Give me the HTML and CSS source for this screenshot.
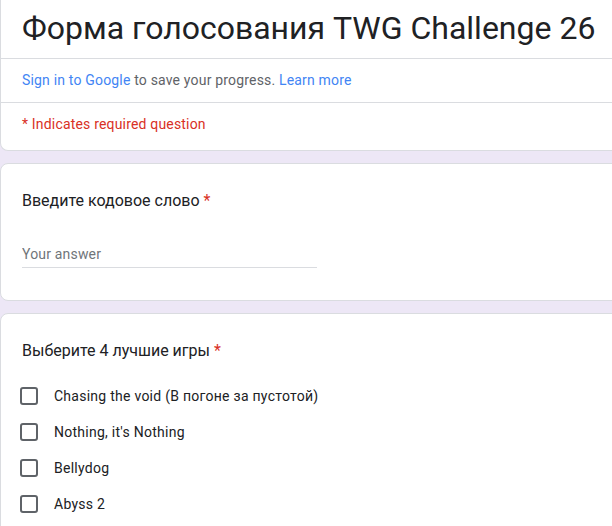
FILE: index.html
```html
<!DOCTYPE html>
<html lang="ru">
<head>
    <meta charset="UTF-8">
    <meta name="viewport" content="width=device-width, initial-scale=1.0">
    <title>Форма голосования TWG Challenge 26</title>
    <link rel="stylesheet" href="styles.css">
</head>
<body>
    <div class="form">
        <div class="card header">
            <h1 class="title">Форма голосования TWG Challenge 26</h1>
            <div class="signin">
                <a href="#">Sign in to Google</a> to save your progress. <a href="#">Learn more</a>
            </div>
            <div class="required-note">* Indicates required question</div>
        </div>

        <div class="card question">
            <div class="q-title">Введите кодовое слово <span class="star">*</span></div>
            <div class="answer">
                <input type="text" placeholder="Your answer">
            </div>
        </div>

        <div class="card question">
            <div class="q-title">Выберите 4 лучшие игры <span class="star">*</span></div>
            <ul class="options">
                <li><span class="box"></span>Chasing the void (В погоне за пустотой)</li>
                <li><span class="box"></span>Nothing, it's Nothing</li>
                <li><span class="box"></span>Bellydog</li>
                <li><span class="box"></span>Abyss 2</li>
            </ul>
        </div>
    </div>
</body>
</html>
```

FILE: styles.css
```css
html, body {
    margin: 0;
    padding: 0;
}
body {
    background-color: #ede7f6;
    font-family: Roboto, "Liberation Sans", sans-serif;
    overflow: hidden;
}
.form {
    width: 640px;
    display: flex;
    flex-direction: column;
    gap: 12px;
}
.card {
    background-color: white;
    border: 1px solid #dadce0;
    border-radius: 8px;
}
.header {
    border-top: none;
    border-radius: 0 0 8px 8px;
}
.title {
    margin: 0;
    padding: 8px 21px 0;
    height: 50px;
    font-size: 32px;
    font-weight: 400;
    line-height: 40px;
    color: #202124;
    border-bottom: 1px solid #dadce0;
}
.signin {
    padding: 0 21px;
    height: 43px;
    line-height: 43px;
    font-size: 14px;
    letter-spacing: 0.18px;
    color: #5f6368;
    border-bottom: 1px solid #dadce0;
}
.signin a {
    color: #4285f4;
    text-decoration: none;
}
.required-note {
    padding: 0 21px;
    height: 47px;
    line-height: 42px;
    font-size: 14px;
    letter-spacing: 0.18px;
    color: #d93025;
}
.question {
    padding: 25px 21px 32px;
}
.q-title {
    font-size: 16px;
    line-height: 24px;
    color: #202124;
}
.star {
    color: #d93025;
}
.answer {
    margin-top: 29px;
    width: 295px;
}
.answer input {
    width: 100%;
    box-sizing: border-box;
    border: none;
    border-bottom: 1px solid #dadce0;
    padding: 4px 0 5px;
    font-family: inherit;
    font-size: 14px;
    letter-spacing: 0.18px;
    color: #202124;
    outline: none;
}
.answer input::placeholder {
    color: #70757a;
}
.options {
    list-style: none;
    margin: 15px 0 0;
    padding: 0;
}
.options li {
    display: flex;
    align-items: center;
    height: 36px;
    font-size: 14px;
    letter-spacing: 0.26px;
    color: #202124;
}
.box {
    width: 14px;
    height: 14px;
    border: 2px solid #5f6368;
    border-radius: 3px;
    margin: 0 16px 0 -2px;
}
```
